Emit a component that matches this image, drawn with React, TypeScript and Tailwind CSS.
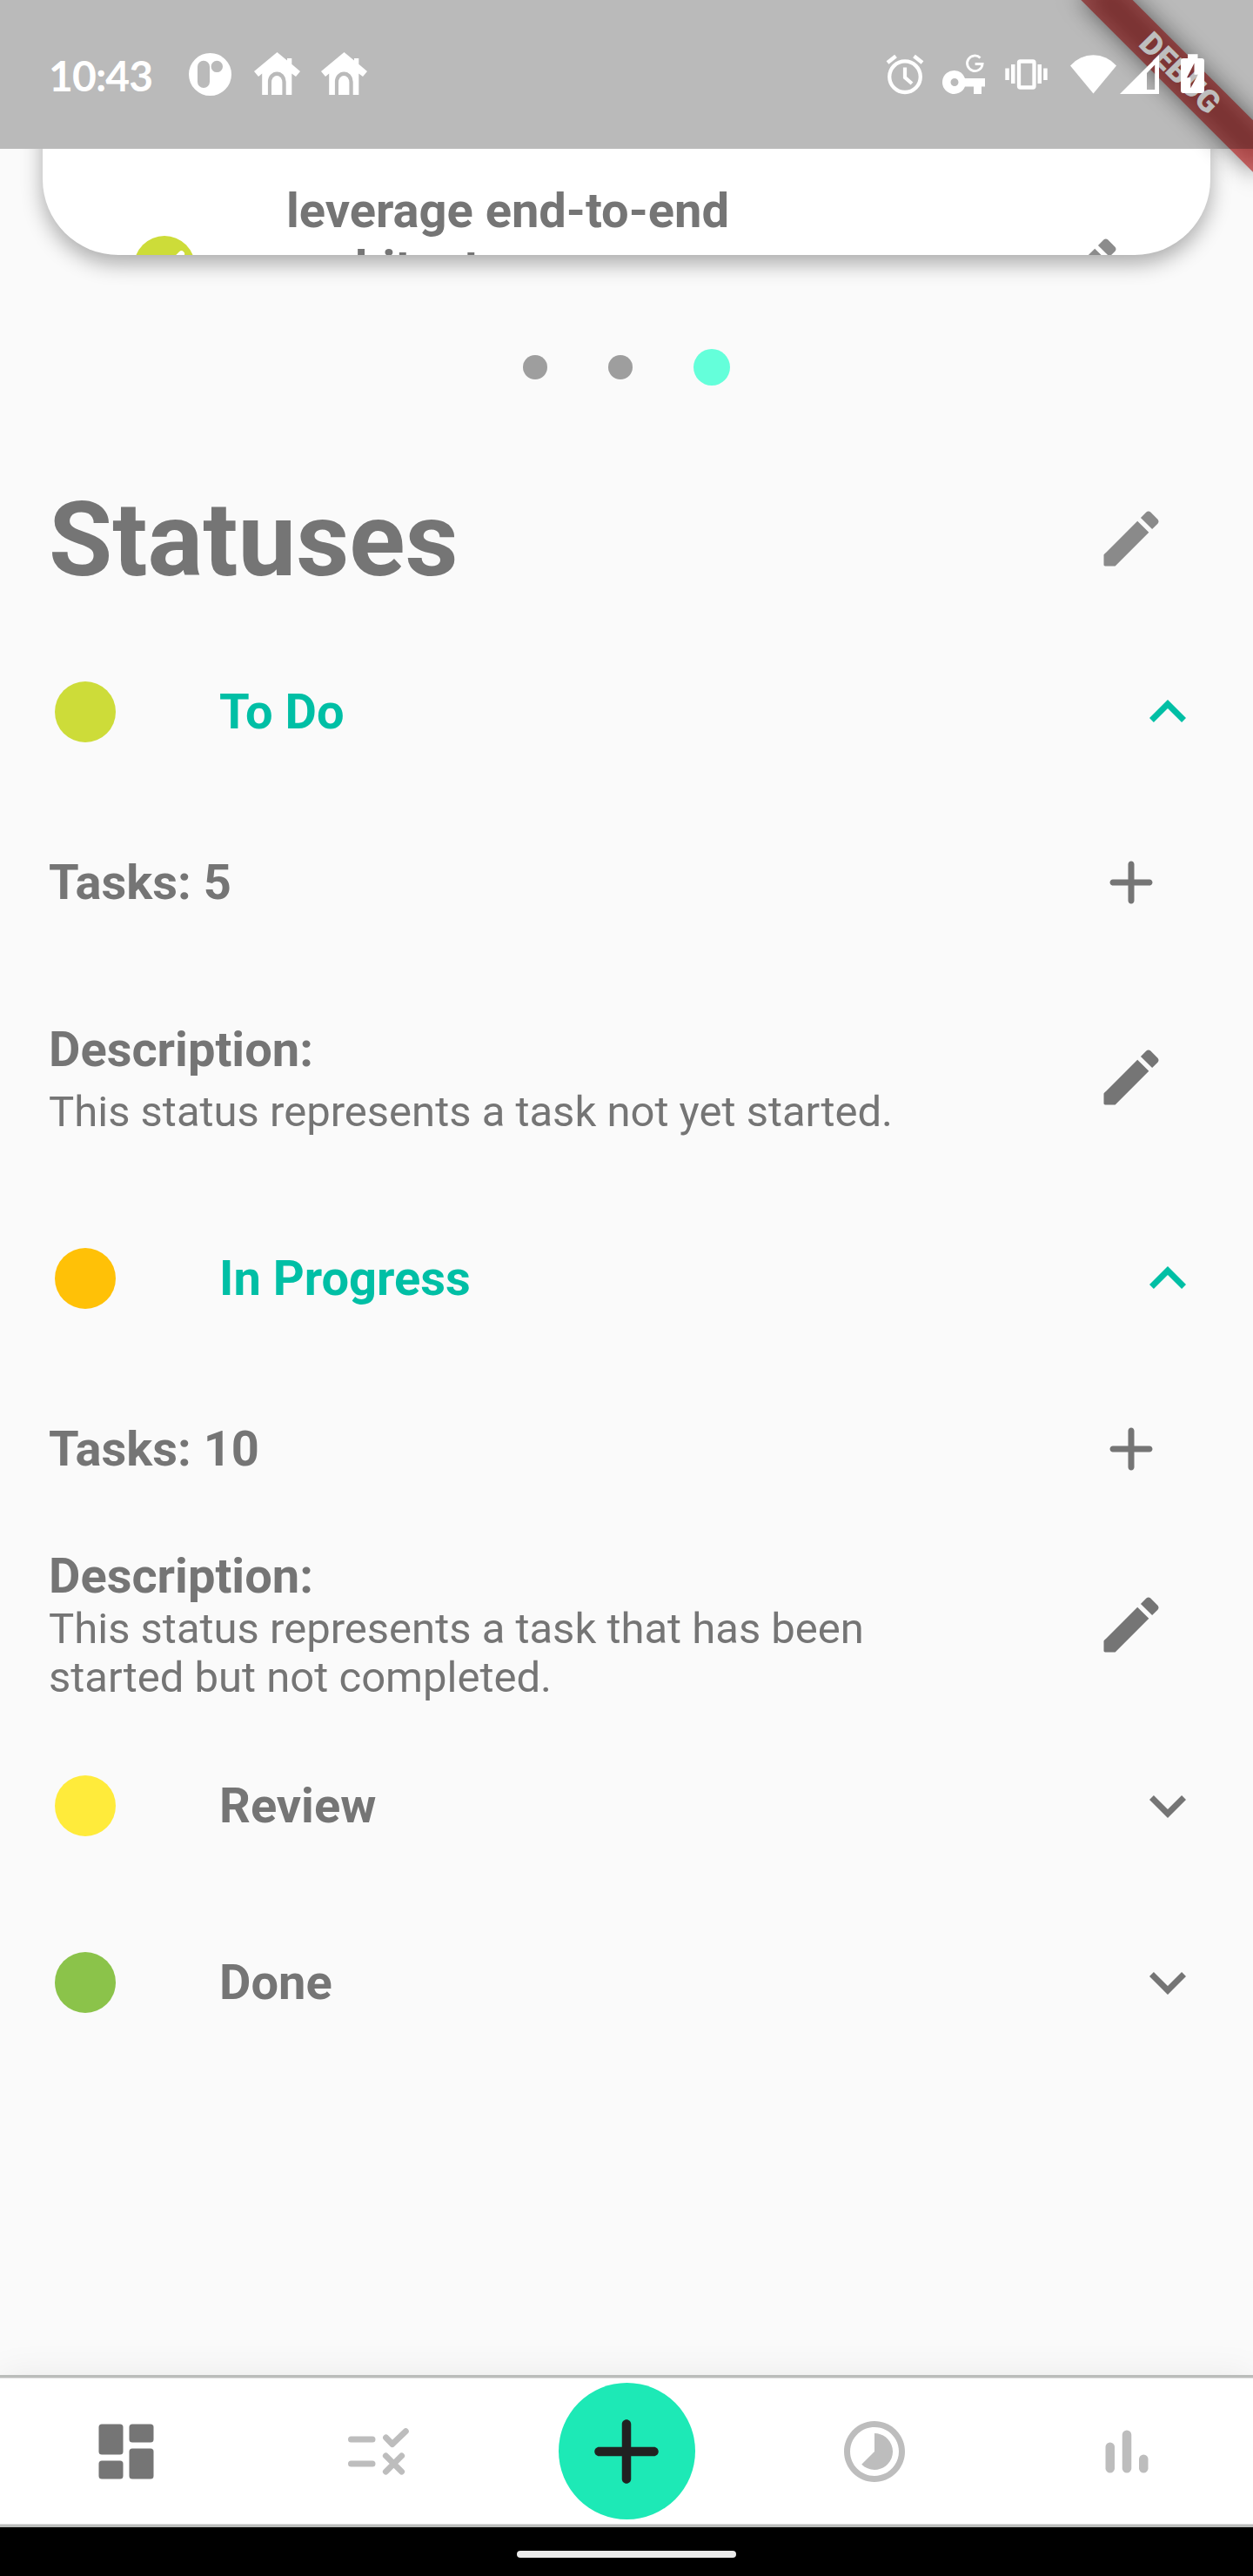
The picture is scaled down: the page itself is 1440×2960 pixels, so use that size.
import React from "react";

const PENCIL =
  "M3 17.46v3.04c0 .28.22.5.5.5h3.04c.13 0 .26-.05.35-.15L17.81 9.94l-3.75-3.75L3.15 17.1c-.1.1-.15.22-.15.36zM20.71 7.04c.39-.39.39-1.02 0-1.41l-2.34-2.34c-.39-.39-1.02-.39-1.41 0l-1.83 1.83 3.75 3.75 1.83-1.83z";

function Pencil({ className }: { className: string }) {
  return (
    <svg viewBox="0 0 24 24" fill="currentColor" className={className}>
      <path d={PENCIL} />
    </svg>
  );
}

function Plus({ className }: { className: string }) {
  return (
    <svg viewBox="0 0 24 24" fill="currentColor" className={className}>
      <path d="M18 13h-5v5c0 .55-.45 1-1 1s-1-.45-1-1v-5H6c-.55 0-1-.45-1-1s.45-1 1-1h5V6c0-.55.45-1 1-1s1 .45 1 1v5h5c.55 0 1 .45 1 1s-.45 1-1 1z" />
    </svg>
  );
}

function Chevron({ up }: { up?: boolean }) {
  return (
    <svg viewBox="0 0 24 24" fill="currentColor" className="size-[84px]">
      <path
        d={
          up
            ? "M12 8l-6 6 1.41 1.41L12 10.83l4.59 4.58L18 14z"
            : "M16.59 8.59L12 13.17 7.41 8.59 6 10l6 6 6-6z"
        }
      />
    </svg>
  );
}

function House() {
  return (
    <svg viewBox="0 0 53 49" fill="currentColor" className="h-[49px] w-[53px]">
      <path d="M26.500 0 L38 9.500 V7 H43.300 V13.700 L53 22 L48 28 L43.300 24.500 V49 H36.700 V34 a10.400 11.500 0 0 0 -20.800 0 V49 H9.200 V24.500 L5 28 L0 22 Z" />
      <path d="M20 49 V34.500 a6.200 7.500 0 0 1 12.400 0 V49 Z" />
    </svg>
  );
}

function SystemIcons() {
  return (
    <svg viewBox="1010 50 400 70" fill="white" className="mt-[50px] mr-[30px] ml-auto h-[70px] w-[400px]">
      {/* alarm */}
      <g fill="none" stroke="white">
        <circle cx="1040" cy="88.200" r="17.800" strokeWidth="4.300" />
        <path d="M1040 77.500V89l8 7" strokeWidth="4.200" />
        <path d="M1020 72l9.500-7.500M1060 72l-9.500-7.500" strokeWidth="4.500" />
      </g>
      {/* key */}
      <path
        fillRule="evenodd"
        d="M1097 81a13.500 13.500 0 1 0 12 18.500h10V108h9v-8.500h4V90h-23A13.500 13.500 0 0 0 1097 81zm0 9a4.500 4.500 0 1 1 0 9 4.500 4.500 0 0 1 0-9z"
      />
      <path
        d="M1126.500 66.500A8.800 8.800 0 1 0 1129.100 73.500h-8.500"
        fill="none"
        stroke="white"
        strokeWidth="2.800"
      />
      {/* vibrate */}
      <rect x="1171" y="70.500" width="17.500" height="30" rx="1.500" fill="none" stroke="white" strokeWidth="4.300" />
      <path d="M1155.300 78.500h4.500v13.500h-4.500zM1162 74h4.500v22H1162zM1192.500 74h4.500v22h-4.500zM1199.200 78.500h4.500v13.500h-4.500z" />
      {/* wifi */}
      <path d="M1230 75.500a35 35 0 0 1 53 0L1256.500 107.500z" />
      {/* mobile signal */}
      <path fillRule="evenodd" d="M1332 63v45h-45zM1318 84v19h9.200V74.500z" />
      {/* battery */}
      <path
        fillRule="evenodd"
        d="M1365 62.300h11.500V67h4.500q3 0 3 3v34q0 3-3 3h-21q-3 0-3-3V70q0-3 3-3h5zM1372.500 72.500L1364 89.300h4.300v12l8.500-15.500h-4.300z"
      />
    </svg>
  );
}

function StatusBar() {
  return (
    <div className="relative z-20 flex h-[171px] shrink-0 items-start bg-black/[0.255] text-white">
      <div className="mt-[57px] ml-[56px] w-[161px] font-['Lato'] text-[48px] leading-[60px] font-bold tracking-[-0.9px]">
        10:43
      </div>
      <div className="mt-[60px] flex">
        <svg viewBox="0 0 49 49" className="mt-px size-[49px]">
          <path
            fill="white"
            fillRule="evenodd"
            d="M24.500 0a24.500 24.500 0 1 1 0 49 24.500 24.500 0 0 1 0-49zM17 8.700a7 7 0 0 0-7 7V33a7 7 0 0 0 14 0V15.700a7 7 0 0 0-7-7zM32.300 8.700a6.700 6.700 0 1 0 0 13.400 6.700 6.700 0 0 0 0-13.400z"
          />
        </svg>
        <div className="ml-[26px] flex gap-[24px]">
          <House />
          <House />
        </div>
      </div>
      <SystemIcons />
    </div>
  );
}

function DebugBanner() {
  return (
    <div className="absolute top-0 right-0 z-10 size-[300px] overflow-hidden">
      <div className="absolute top-[63px] left-[76px] h-[42px] w-[280px] rotate-45 bg-black/50 blur-[14px]" />
      <div className="absolute top-[63px] left-[76px] flex h-[42px] w-[280px] rotate-45 items-center justify-center bg-[#b71c1c]/[0.627] text-[35.7px] leading-[42px] font-black text-white">
        DEBUG
      </div>
    </div>
  );
}

function TaskCard() {
  return (
    <div className="h-[172px] shrink-0 overflow-hidden px-[49px]">
      <div className="-mt-[80px] h-[202px] rounded-b-[87px] bg-white pt-[80px] shadow-[0_10px_24px_rgba(0,0,0,0.32)]">
        <div className="flex h-[122px] items-start overflow-hidden rounded-b-[87px]">
          <div className="mt-[100px] ml-[105px] size-[70px] shrink-0 rounded-full bg-[#cddc39]">
            <svg viewBox="0 0 70 70" fill="none" stroke="white" strokeWidth="7" strokeLinecap="round" strokeLinejoin="round">
              <path d="M54.500 20.700L27 48.200L15.500 36.700" />
            </svg>
          </div>
          <div className="mt-[38px] ml-[105px] flex-1 text-[56px] leading-[66px] font-bold">
            leverage end-to-end
            <br />
            architectures
          </div>
          <Pencil className="mt-[93px] mr-[98px] size-[84px] shrink-0 text-[#8c8c8c]" />
        </div>
      </div>
    </div>
  );
}

function PageDots() {
  return (
    <div className="mt-[58px] flex h-[42px] shrink-0 items-center gap-[70px] pl-[601px]">
      <div className="size-[28px] rounded-full bg-[#9e9e9e]" />
      <div className="size-[28px] rounded-full bg-[#9e9e9e]" />
      <div className="size-[42px] rounded-full bg-[#64ffda]" />
    </div>
  );
}

function StatusRow({ dot, name, open }: { dot: string; name: string; open?: boolean }) {
  return (
    <div className={`flex h-[196px] items-center ${open ? "text-[#00bfa5]" : "text-[#757575]"}`}>
      <div className={`ml-[63px] size-[70px] rounded-full ${dot}`} />
      <div className="ml-[119px] flex-1 text-[56px] leading-[66px] font-bold">{name}</div>
      <div className="mr-[56px]">
        <Chevron up={open} />
      </div>
    </div>
  );
}

function TasksRow({ count }: { count: number }) {
  return (
    <div className="flex h-[196px] items-center justify-between pr-[98px] pl-[56px]">
      <div className="text-[56px] leading-[66px] font-bold">Tasks: {count}</div>
      <Plus className="size-[84px]" />
    </div>
  );
}

function BottomNav() {
  return (
    <nav className="mt-auto flex h-[175px] shrink-0 items-center border-y-[3px] border-[#bbbdbb] bg-white text-[#bdbdbd] shadow-[0_0_40px_rgba(0,0,0,0.07),inset_0_1px_#dcdcdc,inset_0_-1px_#dcdcdc]">
      <div className="flex w-[290px] justify-center">
        <svg viewBox="0 0 24 24" className="size-[84px] fill-[#757575]">
          <rect x="3" y="3" width="8" height="10" rx="1" />
          <rect x="13" y="3" width="8" height="6" rx="1" />
          <rect x="3" y="15" width="8" height="6" rx="1" />
          <rect x="13" y="11" width="8" height="10" rx="1" />
        </svg>
      </div>
      <div className="flex w-[290px] justify-center">
        <svg
          viewBox="0 0 24 24"
          fill="none"
          stroke="currentColor"
          strokeWidth="2"
          strokeLinecap="round"
          strokeLinejoin="round"
          className="size-[84px]"
        >
          <path d="M3 8h7M3 16h7M14.450 7.450l2.080 2.100 4.400-4.200M14.400 13.400l5.200 5.200M19.600 13.400l-5.200 5.200" />
        </svg>
      </div>
      <div className="flex w-[280px] justify-center">
        <div className="flex size-[157px] items-center justify-center rounded-full bg-[#1de9b6] text-[#212121]">
          <Plus className="size-[126px]" />
        </div>
      </div>
      <div className="flex w-[290px] justify-center">
        <svg viewBox="0 0 24 24" fill="currentColor" className="size-[84px]">
          <path d="M16.240 7.760C15.070 6.590 13.540 6 12 6v6l-4.240 4.240c2.340 2.340 6.140 2.340 8.490 0 2.340-2.340 2.340-6.140-.01-8.480zM12 2C6.480 2 2 6.480 2 12s4.480 10 10 10 10-4.480 10-10S17.520 2 12 2zm0 18c-4.420 0-8-3.580-8-8s3.580-8 8-8 8 3.580 8 8-3.580 8-8 8z" />
        </svg>
      </div>
      <div className="flex w-[290px] justify-center">
        <svg viewBox="0 0 24 24" fill="currentColor" className="size-[84px]">
          <rect x="5" y="9" width="3" height="10" rx="1.500" />
          <rect x="10.500" y="5" width="3" height="14" rx="1.500" />
          <rect x="16" y="13" width="3" height="6" rx="1.500" />
        </svg>
      </div>
    </nav>
  );
}

export default function App() {
  return (
    <div className="relative flex h-[2960px] w-[1440px] flex-col overflow-hidden bg-[#fafafa] font-['Roboto'] text-[#757575]">
      <StatusBar />
      <DebugBanner />
      <TaskCard />
      <PageDots />
      <div className="mt-[78px] flex h-[196px] items-center justify-between pr-[98px] pl-[56px]">
        <h1 className="mt-[3px] text-[119px] leading-[140px] font-bold">Statuses</h1>
        <Pencil className="size-[84px] text-[#8a8a8a]" />
      </div>
      <div className="mt-[3px] flex flex-col gap-[7px]">
        <section>
          <StatusRow dot="bg-[#cddc39]" name="To Do" open />
          <TasksRow count={5} />
          <div className="flex h-[252px] items-center justify-between pr-[98px] pl-[56px]">
            <div className="mt-[3px]">
              <div className="text-[56px] leading-[66px] font-bold">Description:</div>
              <div className="mt-[10px] text-[49px] leading-[57px]">
                This status represents a task not yet started.
              </div>
            </div>
            <Pencil className="size-[84px]" />
          </div>
        </section>
        <section>
          <StatusRow dot="bg-[#ffc107]" name="In Progress" open />
          <TasksRow count={10} />
          <div className="flex h-[207px] items-center justify-between pr-[98px] pl-[56px]">
            <div>
              <div className="text-[56px] leading-[66px] font-bold">Description:</div>
              <div className="text-[49px] leading-[56px]">
                This status represents a task that has been
                <br />
                started but not completed.
              </div>
            </div>
            <Pencil className="size-[84px]" />
          </div>
        </section>
        <StatusRow dot="bg-[#ffeb3b]" name="Review" />
        <StatusRow dot="bg-[#8bc34a]" name="Done" />
      </div>
      <BottomNav />
      <div className="z-10 flex h-[56px] shrink-0 justify-center bg-black">
        <div className="mt-[27px] h-[8px] w-[252px] rounded-full bg-[#ebebeb]" />
      </div>
    </div>
  );
}
